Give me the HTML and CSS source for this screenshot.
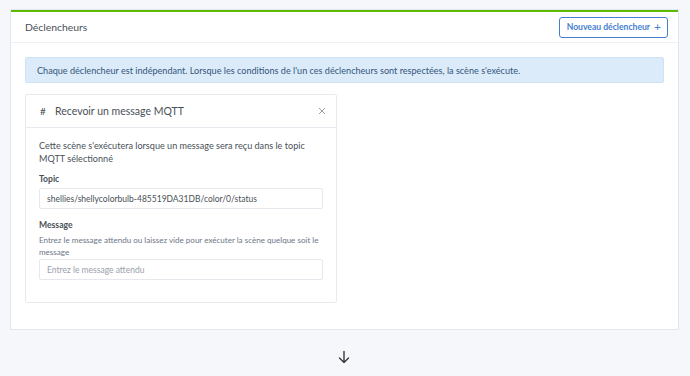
FILE: index.html
```html
<!DOCTYPE html>
<html lang="fr">
<head>
<meta charset="utf-8">
<link rel="stylesheet" href="styles.css">
</head>
<body>
<div class="page">
  <div class="card">
    <div class="card-header">
      <div class="card-title">Déclencheurs</div>
      <button class="btn-outline">Nouveau déclencheur <span class="plus">+</span></button>
    </div>
    <div class="card-body">
      <div class="alert">Chaque déclencheur est indépendant. Lorsque les conditions de l'un ces déclencheurs sont respectées, la scène s'exécute.</div>
      <div class="trigger">
        <div class="trigger-header">
          <span class="hash">#</span>
          <span class="trigger-title">Recevoir un message MQTT</span>
          <span class="close">
            <svg width="8" height="8" viewBox="0 0 8 8"><path d="M1 1L7 7M7 1L1 7" stroke="#9aa0ac" stroke-width="1" fill="none"/></svg>
          </span>
        </div>
        <div class="trigger-body">
          <p class="desc">Cette scène s'exécutera lorsque un message sera reçu dans le topic MQTT sélectionné</p>
          <div class="group">
            <label class="label">Topic</label>
            <div class="input">shellies/shellycolorbulb-485519DA31DB/color/0/status</div>
          </div>
          <div class="group">
            <label class="label">Message</label>
            <div class="hint">Entrez le message attendu ou laissez vide pour exécuter la scène quelque soit le message</div>
            <div class="input placeholder">Entrez le message attendu</div>
          </div>
        </div>
      </div>
    </div>
  </div>
  <div class="arrow">
    <svg width="14" height="14" viewBox="0 0 14 14"><path d="M7 1.5V12.5M2.5 8L7 12.5L11.5 8" stroke="#343a40" stroke-width="1.4" fill="none" stroke-linecap="round" stroke-linejoin="round"/></svg>
  </div>
</div>
</body>
</html>
```
FILE: styles.css
```css
html, body {
  margin: 0;
  padding: 0;
  background: #f5f7fb;
  font-family: "Lato", "Liberation Sans", sans-serif;
  color: #495057;
}
.page {
  padding: 10px 12px 0 11px;
}
.card {
  background: #fff;
  border-top: 2px solid #5eba00;
  box-shadow: 0 0 0 1px rgba(0, 40, 100, 0.08);
  height: 319px;
  box-sizing: border-box;
}
.card-header {
  height: 30px;
  display: flex;
  align-items: center;
  justify-content: space-between;
  padding: 0 10px 0 14px;
  border-bottom: 1px solid #eef0f4;
}
.card-title {
  font-size: 10.4px;
  color: #495057;
}
.btn-outline {
  font-family: inherit;
  font-size: 8.6px;
  font-weight: 700;
  color: #467fcf;
  background: #fff;
  border: 1px solid #467fcf;
  border-radius: 3px;
  height: 21px;
  padding: 0 6px 0 7px;
  display: flex;
  align-items: center;
  gap: 4px;
}
.plus {
  font-size: 12px;
  font-weight: 400;
  line-height: 1;
}
.card-body {
  padding: 14px 14px 0 14px;
}
.alert {
  background: #dbebf9;
  border: 1px solid #d0e3f5;
  border-radius: 2px;
  color: #34557a;
  font-size: 9.1px;
  height: 26px;
  box-sizing: border-box;
  display: flex;
  align-items: center;
  padding-left: 11px;
}
.trigger {
  margin-top: 11px;
  width: 312px;
  height: 209px;
  box-sizing: border-box;
  border: 1px solid #e8eaef;
  border-radius: 2px;
}
.trigger-header {
  height: 33px;
  box-sizing: border-box;
  border-bottom: 1px solid #e8eaef;
  display: flex;
  align-items: center;
  padding: 0 10px 0 14px;
}
.hash {
  font-size: 10px;
  color: #495057;
  width: 15px;
}
.trigger-title {
  font-size: 10.5px;
  color: #495057;
  flex: 1;
}
.close {
  display: flex;
}
.trigger-body {
  padding: 11px 13px 0 13px;
}
.desc {
  margin: 0;
  font-size: 9.1px;
  line-height: 13px;
  color: #495057;
}
.group {
  margin-top: 8px;
}
.group + .group {
  margin-top: 10px;
}
.label {
  display: block;
  font-size: 8.6px;
  font-weight: 700;
  color: #495057;
  margin-bottom: 4px;
  padding-top: 1px;
}
.hint {
  font-size: 8.05px;
  line-height: 12px;
  color: #6e7687;
  margin-top: 0;
  margin-bottom: 1px;
}
.input {
  height: 21px;
  box-sizing: border-box;
  border: 1px solid #e6e8ee;
  border-radius: 2px;
  font-size: 8.5px;
  color: #495057;
  display: flex;
  align-items: center;
  padding-left: 7px;
}
.input.placeholder {
  color: #9aa0ac;
}
.arrow {
  display: flex;
  justify-content: center;
  padding-top: 21px;
  padding-right: 1px;
}
```
